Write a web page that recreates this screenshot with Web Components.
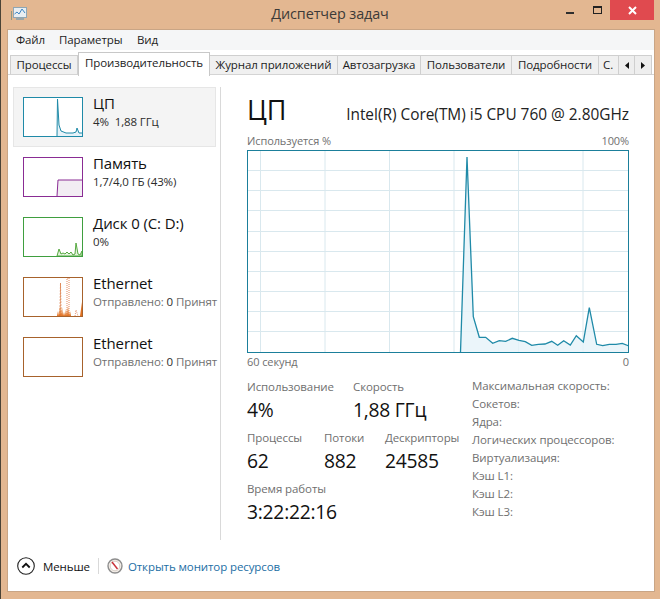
<!DOCTYPE html>
<html lang="ru">
<head>
<meta charset="utf-8">
<title>Диспетчер задач</title>
<style>
  html, body { margin:0; padding:0; background:#e3b791; }
  body { font-family:"Open Sans","Noto Sans","Liberation Sans",sans-serif; letter-spacing:-0.1px; }
</style>
</head>
<body>
<app-window>
  <title-bar slot="title">Диспетчер задач</title-bar>
  <menu-bar slot="menu">
    <menu-item style="width:43px">Файл</menu-item>
    <menu-item style="width:78px">Параметры</menu-item>
    <menu-item>Вид</menu-item>
  </menu-bar>
  <tab-strip slot="tabs">
    <tab-item style="width:68px">Процессы</tab-item>
    <tab-item active style="width:132px">Производительность</tab-item>
    <tab-item style="width:128px">Журнал приложений</tab-item>
    <tab-item style="width:83px">Автозагрузка</tab-item>
    <tab-item style="width:91px">Пользователи</tab-item>
    <tab-item style="width:87px">Подробности</tab-item>
    <tab-item style="width:19px" clip>С.</tab-item>
    <tab-arrow dir="left"></tab-arrow>
    <tab-arrow dir="right"></tab-arrow>
  </tab-strip>

  <side-list slot="side">
    <side-item selected color="#1f8aa8">
      <svg slot="thumb" viewBox="0 0 58 38" width="58" height="38">
        <polygon points="33,38 33.5,1 35,27 37,33 42,35 49,35 52,34 53,30 55,35 58,35 58,38" fill="#e6f2f8"/>
        <polyline points="33,38 33.5,1 35,27 37,33 42,35 49,35 52,34 53,30 55,35 58,35" fill="none" stroke="#1f8aa8" stroke-width="1"/>
      </svg>
      <span slot="name">ЦП</span>
      <span slot="info">4%&nbsp; 1,88 ГГц</span>
    </side-item>
    <side-item color="#8a2c94">
      <svg slot="thumb" viewBox="0 0 58 38" width="58" height="38">
        <polygon points="33,38 34,22 58,22 58,38" fill="#f2edf3"/>
        <polyline points="33,38 34,22 58,22" fill="none" stroke="#8a2c94" stroke-width="1"/>
      </svg>
      <span slot="name">Память</span>
      <span slot="info">1,7/4,0 ГБ (43%)</span>
    </side-item>
    <side-item color="#3f9f3f">
      <svg slot="thumb" viewBox="0 0 58 38" width="58" height="38">
        <polygon points="33,38 35,31 37,36 39,35 41,36 43,34 45,36 47,34 49,37 51,36 52,25 54,36 56,37 58,33 58,38" fill="#e4f3df" stroke="#55a83f" stroke-width="1"/>
      </svg>
      <span slot="name">Диск 0 (C: D:)</span>
      <span slot="info">0%</span>
    </side-item>
    <side-item color="#a7622c">
      <svg slot="thumb" viewBox="0 0 58 38" width="58" height="38">
        <polyline points="36,38 36.5,5 37,38" fill="none" stroke="#e08a5a" stroke-width="1" stroke-dasharray="2 1"/>
        <polyline points="43,38 43,0 45,0 45,38" fill="none" stroke="#e58a5c" stroke-width="1" stroke-dasharray="1 1"/>
        <polyline points="51,38 52,32 54,38" fill="none" stroke="#e89a78" stroke-width="1" stroke-dasharray="1 1"/>
        <polygon points="33,38 34,33 35,38 36,28 37,38 38,29 39,38 40,34 41,38 42,31 43,38 44,28 45,38 46,33 47,38 56,38 58,24 58,38" fill="#e0701f"/>
      </svg>
      <span slot="name">Ethernet</span>
      <span slot="info"><i>Отправлено:</i> 0 <i>Принят</i></span>
    </side-item>
    <side-item color="#a7622c">
      <span slot="name">Ethernet</span>
      <span slot="info"><i>Отправлено:</i> 0 <i>Принят</i></span>
    </side-item>
  </side-list>

  <perf-panel slot="main">
    <span slot="heading">ЦП</span>
    <span slot="model">Intel(R) Core(TM) i5 CPU 760 @ 2.80GHz</span>
    <perf-graph slot="graph"></perf-graph>
    <stat-row slot="stats" style="height:51px">
      <stat-block style="width:106px" label="Использование">4%</stat-block>
      <stat-block label="Скорость">1,88 ГГц</stat-block>
    </stat-row>
    <stat-row slot="stats" style="height:51px">
      <stat-block style="width:77px" label="Процессы">62</stat-block>
      <stat-block style="width:61px" label="Потоки">882</stat-block>
      <stat-block label="Дескрипторы">24585</stat-block>
    </stat-row>
    <stat-row slot="stats">
      <stat-block label="Время работы">3:22:22:16</stat-block>
    </stat-row>
    <spec-list slot="specs">
      <div>Максимальная скорость:</div>
      <div>Сокетов:</div>
      <div>Ядра:</div>
      <div>Логических процессоров:</div>
      <div>Виртуализация:</div>
      <div>Кэш L1:</div>
      <div>Кэш L2:</div>
      <div>Кэш L3:</div>
    </spec-list>
  </perf-panel>

  <footer-bar slot="footer"></footer-bar>
</app-window>

<script>
//
// helper, every element is a shadow root with its own style
//
function shadow(el, html) {
  el.attachShadow({ mode: "open" }).innerHTML = html;
}

customElements.define("app-window", class extends HTMLElement {
  connectedCallback() {
    shadow(this, `
    <style>
      :host { display:block; width:660px; height:599px; box-sizing:border-box;
              border-left:1px solid #4b4336; padding:0 6px 8px 7px; overflow:hidden; }
      .content { display:flex; flex-direction:column; height:561px; background:#fff;
                 box-shadow:0 0 0 1px #c9a585; }
      .body { display:flex; height:465px; padding-top:12px; box-sizing:content-box; }
    </style>
    <slot name="title"></slot>
    <div class="content">
      <slot name="menu"></slot>
      <slot name="tabs"></slot>
      <div class="body">
        <slot name="side"></slot>
        <slot name="main"></slot>
      </div>
      <slot name="footer"></slot>
    </div>`);
  }
});

customElements.define("title-bar", class extends HTMLElement {
  connectedCallback() {
    shadow(this, `
    <style>
      :host { display:grid; grid-template-columns:1fr auto 1fr; height:30px; font-size:14.4px; color:#3c3a38; }
      .left { padding:6px 0 0 3px; }
      .text { padding-top:4px; line-height:20px; margin-left:-2px; }
      .btns { display:flex; justify-content:flex-end; align-items:flex-start; }
      .min { width:8px; height:2px; background:#2e2e2e; margin:12px 19px 0 0; }
      .max { width:7px; height:5px; border:1px solid #222; border-top-width:2px; margin:6px 8px 0 0; }
      .close { width:44px; height:20px; background:#e04a4f; display:flex; align-items:center; justify-content:center; }
    </style>
    <div class="left">
      <svg width="17" height="17" viewBox="0 0 17 17">
        <rect x="2.5" y="1.5" width="13" height="10" fill="#e8eef2" stroke="#8fa6b4"/>
        <polyline points="3.5,8 6,6 8,8 11,3 14,7" fill="none" stroke="#3d86c4"/>
        <rect x="5" y="12" width="8" height="2" fill="#9aa6a8"/>
        <rect x="0" y="5" width="1" height="9" fill="#8d9a86"/>
      </svg>
    </div>
    <div class="text"><slot></slot></div>
    <div class="btns">
      <div class="min"></div><div class="max"></div>
      <div class="close">
        <svg width="9" height="9" viewBox="0 0 9 9"><path d="M1 1l7 7M8 1l-7 7" stroke="#fff" stroke-width="2"/></svg>
      </div>
    </div>`);
  }
});

customElements.define("menu-bar", class extends HTMLElement {
  connectedCallback() {
    shadow(this, `
    <style>
      :host { display:flex; height:20px; align-items:center; background:#f5f6f7; padding-left:8px;
              font-size:11.5px; color:#1d1d1d; }
    </style><slot></slot>`);
  }
});
customElements.define("menu-item", class extends HTMLElement {
  connectedCallback() {
    shadow(this, `<style>:host { display:block; line-height:20px; }</style><slot></slot>`);
  }
});

customElements.define("tab-strip", class extends HTMLElement {
  connectedCallback() {
    shadow(this, `
    <style>
      :host { display:flex; height:25px; box-sizing:border-box; padding:5px 0 0 2px;
              border-bottom:1px solid #d4d4d4; font-size:11.5px; color:#1d1d1d; background:#fff; }
    </style><slot></slot>`);
  }
});
customElements.define("tab-item", class extends HTMLElement {
  connectedCallback() {
    shadow(this, `
    <style>
      :host { display:block; box-sizing:border-box; height:20px; flex:none; overflow:hidden; white-space:nowrap;
              text-align:center; line-height:18px; background:#f0f0f0; border:1px solid #cfcfcf; border-left-width:0;
              border-bottom-color:#d4d4d4; }
      :host(:first-child) { border-left-width:1px; }
      :host([active]) { height:24px; margin-top:-3px; background:#fff; border-color:#c8c8c8; border-bottom:0; border-left-width:1px; line-height:20px; }
      :host([clip]) { text-align:left; padding-left:4px; border-right:0; }
    </style><slot></slot>`);
  }
});
customElements.define("tab-arrow", class extends HTMLElement {
  connectedCallback() {
    const left = this.getAttribute("dir") === "left";
    shadow(this, `
    <style>
      :host { display:flex; width:17px; height:20px; box-sizing:border-box; flex:none; align-items:center; justify-content:center;
              background:#eeeeee; border:1px solid #cfcfcf; border-left-width:${left ? 1 : 0}px; }
    </style>
    <svg width="4" height="7" viewBox="0 0 4 7"><path d="${left ? "M4 0v7L0 3.5z" : "M0 0v7l4-3.5z"}" fill="#111"/></svg>`);
  }
});

customElements.define("side-list", class extends HTMLElement {
  connectedCallback() {
    shadow(this, `
    <style>
      :host { display:block; box-sizing:border-box; width:213px; height:453px; flex:none; padding-left:5px;
              border-right:1px solid #d9d9d9; }
    </style><slot></slot>`);
  }
});
customElements.define("side-item", class extends HTMLElement {
  connectedCallback() {
    const color = this.getAttribute("color");
    shadow(this, `
    <style>
      :host { display:flex; box-sizing:border-box; width:203px; height:60px; padding:9px 0 0 9px; border:1px solid transparent; }
      :host([selected]) { background:#f4f4f4; border-color:#e6e6e6; }
      .thumb { width:58px; height:38px; border:1px solid ${color}; background:#fff; flex:none; display:block; }
      .thumb ::slotted(svg) { display:block; }
      .txt { margin-left:10px; margin-top:-4px; white-space:nowrap; }
      .name { font-size:15px; line-height:20px; color:#111; }
      .info { font-size:11.5px; line-height:17px; color:#2b2b2b; }
      ::slotted(span) { display:block; }
    </style>
    <div class="thumb"><slot name="thumb"></slot></div>
    <div class="txt">
      <div class="name"><slot name="name"></slot></div>
      <div class="info"><slot name="info"></slot></div>
    </div>`);
    this.querySelectorAll("i").forEach(i => { i.style.cssText = "font-style:normal;color:#6f6f6f"; });
  }
});

customElements.define("perf-panel", class extends HTMLElement {
  connectedCallback() {
    shadow(this, `
    <style>
      :host { display:block; box-sizing:border-box; width:408px; padding-left:26px; flex:none; }
      .head { display:flex; justify-content:space-between; align-items:baseline; height:45px; color:#111; }
      .h1 { font-size:27px; line-height:46px; }
      .model { font-size:15.4px; color:#222; letter-spacing:0; }
      .under { display:flex; justify-content:space-between; font-size:11px; line-height:17px; color:#6f6f6f; }
      .gap { height:1px; }
      .bottom { display:flex; margin-top:8px; }
      .stats { width:225px; }
      .specs { margin-top:-1px; }
    </style>
    <div class="head">
      <div class="h1"><slot name="heading"></slot></div>
      <div class="model"><slot name="model"></slot></div>
    </div>
    <div class="under"><span>Используется %</span><span>100%</span></div>
    <div class="gap"></div>
    <slot name="graph"></slot>
    <div class="under"><span>60 секунд</span><span>0</span></div>
    <div class="bottom">
      <div class="stats"><slot name="stats"></slot></div>
      <div class="specs"><slot name="specs"></slot></div>
    </div>`);
  }
});

customElements.define("perf-graph", class extends HTMLElement {
  connectedCallback() {
    const pts = [[460.5,352],[467,157],[473.3,316.7],[479.3,337.3],[485.7,337.3],[492.7,343.3],[499.3,340.7],[505.7,341.3],[512.3,338.3],[519,340.3],[525.3,341.7],[531.7,345.3],[538.3,344.3],[545,344],[551.7,341.3],[557.7,345.3],[563.7,340.7],[570.3,345],[576.3,335.7],[583.3,342],[589.3,307.7],[596.7,344.3],[602.7,345.7],[609.3,344.3],[616,344.3],[622.3,343.3],[628.3,345.7]]
      .map(p => (p[0] - 248).toFixed(1) + "," + (p[1] - 151).toFixed(1)).join(" ");
    let grid = "";
    for (let i = 0; i < 6; i++) {
      const x = 12.5 + i * 64.5;
      grid += `<line x1="${x}" y1="0" x2="${x}" y2="201"/>`;
    }
    for (let i = 1; i < 10; i++) {
      const y = Math.round(i * 20.15) - 0.5;
      grid += `<line x1="0" y1="${y}" x2="380" y2="${y}"/>`;
    }
    shadow(this, `
    <style>
      :host { display:block; box-sizing:border-box; width:382px; height:203px; border:1px solid #1b7f9b; }
      svg { display:block; }
      .grid line { stroke:#d9e8ee; stroke-width:1; }
    </style>
    <svg width="380" height="201" viewBox="0 0 380 201">
      <g class="grid">${grid}</g>
      <polygon points="${pts} 380,201" fill="#e6f2f9" fill-opacity=".8"/>
      <polyline points="${pts}" fill="none" stroke="#1f8aa8" stroke-width="1.3"/>
    </svg>`);
  }
});

customElements.define("stat-row", class extends HTMLElement {
  connectedCallback() {
    shadow(this, `<style>:host { display:flex; }</style><slot></slot>`);
  }
});
customElements.define("stat-block", class extends HTMLElement {
  connectedCallback() {
    shadow(this, `
    <style>
      :host { display:block; flex:none; white-space:nowrap; }
      .l { font-size:11.5px; line-height:18px; color:#6f6f6f; }
      .v { font-size:19.3px; line-height:27px; color:#111; letter-spacing:-0.25px; }
    </style>
    <div class="l">${this.getAttribute("label")}</div>
    <div class="v"><slot></slot></div>`);
  }
});
customElements.define("spec-list", class extends HTMLElement {
  connectedCallback() {
    shadow(this, `
    <style>
      :host { display:block; font-size:11.5px; line-height:18px; color:#6f6f6f; white-space:nowrap; }
    </style><slot></slot>`);
  }
});

customElements.define("footer-bar", class extends HTMLElement {
  connectedCallback() {
    shadow(this, `
    <style>
      :host { display:flex; align-items:center; height:51px; box-sizing:border-box; padding:0 0 0 9px; font-size:11.5px; color:#111; }
      .up { display:block; margin-right:8px; }
      .sep { width:1px; height:16px; background:#d9d9d9; margin:0 8px; }
      .res { display:block; margin-right:5px; }
      .link { color:#1c6ea4; }
    </style>
    <svg class="up" width="18" height="18" viewBox="0 0 18 18">
      <circle cx="9" cy="9" r="8.3" fill="#fff" stroke="#222" stroke-width="1.1"/>
      <path d="M5.3 10.5L9 6.8l3.7 3.7" fill="none" stroke="#111" stroke-width="1.8"/>
    </svg>
    <span>Меньше</span>
    <span class="sep"></span>
    <svg class="res" width="16" height="16" viewBox="0 0 16 16">
      <circle cx="8" cy="8" r="7" fill="#f5efe9" stroke="#8d8d8d" stroke-width="1.4"/>
      <circle cx="8" cy="8" r="4.8" fill="#fff" stroke="#d8cfc8"/>
      <path d="M5 4l5.5 7" stroke="#c8323a" stroke-width="1.5"/>
    </svg>
    <span class="link">Открыть монитор ресурсов</span>`);
  }
});
</script>
</body>
</html>
